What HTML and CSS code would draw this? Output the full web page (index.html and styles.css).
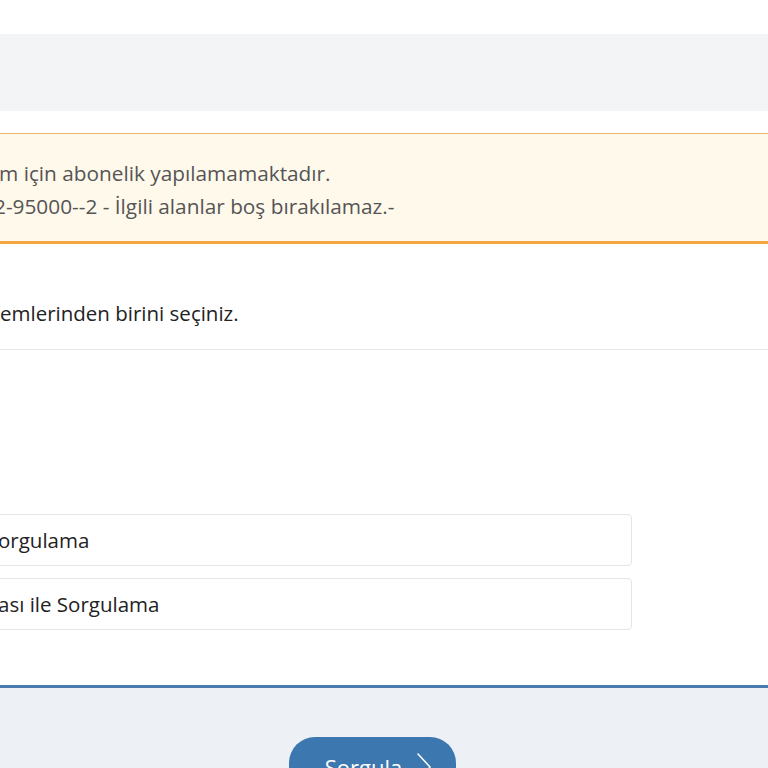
FILE: index.html
```html
<!DOCTYPE html>
<html lang="tr">
<head>
<meta charset="utf-8">
<link rel="stylesheet" href="styles.css">
</head>
<body>
<div class="page">
  <div class="top-gap"></div>
  <div class="band"></div>
  <div class="alert">
    <p class="alert-line first">m için abonelik yapılamamaktadır.</p>
    <p class="alert-line second">2-95000--2 - İlgili alanlar boş bırakılamaz.-</p>
  </div>
  <div class="intro">
    <p class="intro-text">emlerinden birini seçiniz.</p>
  </div>
  <div class="options">
    <div class="option"><span class="opt-text">orgulama</span></div>
    <div class="option"><span class="opt-text">ası ile Sorgulama</span></div>
  </div>
  <div class="footer">
    <button class="btn">Sorgula <svg class="chev" viewBox="0 0 16 30" width="16" height="30"><path d="M2 2 L14 15 L2 28" fill="none" stroke="#ffffff" stroke-width="1.5" stroke-linecap="round"/></svg></button>
  </div>
</div>
</body>
</html>
```

FILE: styles.css
```css
html, body {
  margin: 0;
  padding: 0;
  background: #ffffff;
  overflow: hidden;
}
body {
  font-family: "Open Sans", "Noto Sans", sans-serif;
  width: 768px;
  height: 768px;
}
.page {
  width: 768px;
  height: 768px;
  overflow: hidden;
}
.top-gap {
  height: 34px;
}
.band {
  height: 77px;
  background: #f3f4f6;
}
.alert {
  margin-top: 22px;
  background: #fff9eb;
  border-top: 1px solid #e6bd66;
  border-bottom: 3px solid #f1a640;
  padding: 23px 0 18px 0;
  color: #555555;
  font-size: 20.8px;
}
.alert-line {
  margin: 0;
  line-height: 33px;
  white-space: nowrap;
}
.alert-line.first {
  text-indent: -1px;
}
.alert-line.second {
  text-indent: -6px;
}
.intro {
  padding-top: 54px;
  padding-bottom: 21px;
  border-bottom: 1px solid #e6e6e6;
}
.intro-text {
  margin: 0;
  line-height: 30px;
  font-size: 20.5px;
  color: #222222;
  white-space: nowrap;
}
.options {
  margin-top: 164px;
  margin-left: -40px;
  width: 672px;
  display: flex;
  flex-direction: column;
  gap: 12px;
}
.option {
  height: 50px;
  border: 1px solid #e5e5e5;
  border-radius: 4px;
  display: flex;
  align-items: center;
  padding-left: 37px;
  font-size: 20.5px;
  color: #222222;
  white-space: nowrap;
}
.footer {
  margin-top: 55px;
  border-top: 3px solid #4a7aae;
  background: #edf1f6;
  height: 83px;
  padding-top: 49px;
  box-sizing: border-box;
  overflow: hidden;
}
.btn {
  margin-left: 289px;
  width: 167px;
  height: 60px;
  border: none;
  border-radius: 26px;
  background: #3c77b0;
  color: #ffffff;
  font-family: "Open Sans", "Noto Sans", sans-serif;
  font-size: 22px;
  display: flex;
  align-items: center;
  justify-content: center;
  gap: 14px;
  padding: 0 0 0 12px;
}
.chev {
  display: block;
}
```
